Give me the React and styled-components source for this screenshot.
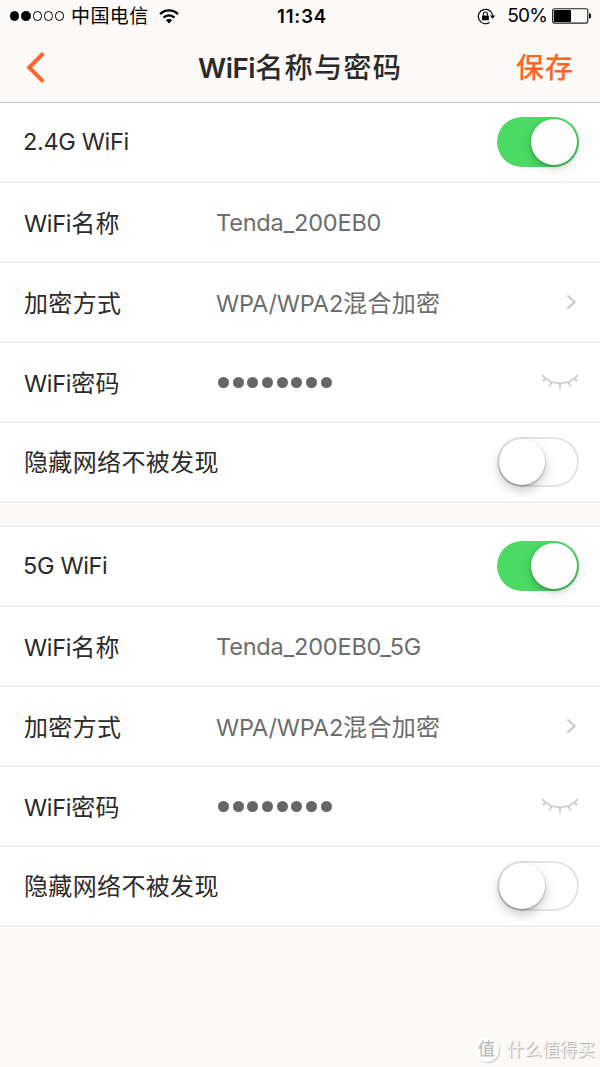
import { useState } from "react";
import styled, { createGlobalStyle } from "styled-components";

// latin and chinese glyphs need their own size and tracking
function Mixed ({ text, ls, weight }) {
    return text.split(/([\u4e00-\u9fff]+)/).filter(Boolean).map((part, i) => (
        /[\u4e00-\u9fff]/.test(part) ? <Han key={i}>{part}</Han> : <Latin key={i} $ls={ls} $weight={weight}>{part}</Latin>
    ))
}

function StatusBar () {
    return (
        <Status>
            <Carrier>
                <Signal>
                    <SignalDot $full/>
                    <SignalDot $full/>
                    <SignalDot/>
                    <SignalDot/>
                    <SignalDot/>
                </Signal>
                <CarrierName>中国电信</CarrierName>
                <svg width="20" height="15" viewBox="0 0 20 15" fill="none" stroke="#000">
                    <path d="M1.1 5.1A12.6 12.6 0 0 1 18.9 5.1" strokeWidth="2.3"/>
                    <path d="M4.5 8.6A7.8 7.8 0 0 1 15.5 8.6" strokeWidth="2.2"/>
                    <path d="M10 14.4L6.9 11.3A4.4 4.4 0 0 1 13.1 11.3Z" fill="#000" stroke="none"/>
                </svg>
            </Carrier>
            <Time>11:34</Time>
            <Power>
                <svg width="19" height="17" viewBox="0 0 19 17" fill="none" stroke="#000">
                    <path d="M12.6 14.5A7.2 7.2 0 1 1 15.7 7.6" strokeWidth="1.2"/>
                    <path d="M12.9 7.4H18.3L15.6 10.8Z" fill="#000" stroke="none"/>
                    <rect x="5" y="7.4" width="6.8" height="4.8" rx="0.5" fill="#000" stroke="none"/>
                    <path d="M6.4 7.6V6A2 2 0 0 1 10.4 6V7.6" strokeWidth="1.1"/>
                </svg>
                <Percent>50%</Percent>
                <svg width="40" height="16" viewBox="0 0 40 16">
                    <rect x="0.6" y="0.7" width="35.2" height="14.4" rx="2" fill="none" stroke="#222" strokeWidth="1.1"/>
                    <rect x="1.8" y="1.9" width="17.2" height="12" rx="0.6" fill="#000"/>
                    <path d="M37 5.2C38.5 5.4 39.2 6.4 39.2 7.9C39.2 9.4 38.5 10.4 37 10.6Z" fill="#000"/>
                </svg>
            </Power>
        </Status>
    )
}

function Network ({ name, ssid }) {
    const [enabled, setEnabled] = useState(true)
    const [hidden, setHidden] = useState(false)

    return (
        <Group>
            <Row>
                <Label $title><Mixed text={name} ls="-0.35px"/></Label>
                <Switch $on={enabled} onClick={() => setEnabled(!enabled)}><Knob/></Switch>
            </Row>
            <Row $top="2px">
                <Label><Mixed text="WiFi名称" ls="-0.3px"/></Label>
                <Value><Mixed text={ssid} ls="-0.2px"/></Value>
            </Row>
            <Row $top="4px">
                <Label>加密方式</Label>
                <Value $top="1px"><Mixed text="WPA/WPA2混合加密" ls="-0.2px"/></Value>
                <Chevron width="11" height="16" viewBox="0 0 11 16">
                    <path d="M1.5 1.5L8.7 8L1.5 14.5" fill="none" stroke="#c7c7cb" strokeWidth="2"/>
                </Chevron>
            </Row>
            <Row $top="2px">
                <Label><Mixed text="WiFi密码" ls="-0.3px"/></Label>
                <Password>
                    {[...Array(8).keys()].map(num => <PasswordDot key={num}/>)}
                </Password>
                <Lashes width="38" height="16" viewBox="0 0 38 16" fill="none" stroke="#c8c8c8" strokeWidth="1.5">
                    <path d="M1.3 1.2C10.5 12 27.5 12 36.7 1.2"/>
                    <path d="M4.8 4.2L1.6 7.4M11 8L8.2 12.6M19 9.4V15.2M27 8L29.8 12.6M33.2 4.2L36.4 7.4"/>
                </Lashes>
            </Row>
            <Row $top="2px">
                <Label>隐藏网络不被发现</Label>
                <Switch $on={hidden} onClick={() => setHidden(!hidden)}><Knob/></Switch>
            </Row>
        </Group>
    )
}

function App () {
    return (
        <Page>
            <GlobalStyle/>
            <Header>
                <StatusBar/>
                <NavBar>
                    <Back>
                        <svg width="20" height="32" viewBox="0 0 20 32">
                            <path d="M18.3 1.3L4.2 15.5L18.3 29.7" fill="none" stroke="#ff6529" strokeWidth="4"/>
                        </svg>
                    </Back>
                    <Title><Mixed text="WiFi名称与密码" ls="-0.4px" weight="600"/></Title>
                    <Save>保存</Save>
                </NavBar>
            </Header>
            <Network name="2.4G WiFi" ssid="Tenda_200EB0"/>
            <Gap/>
            <Network name="5G WiFi" ssid="Tenda_200EB0_5G"/>
            <Watermark>
                <Badge>值</Badge>
                <span>什么值得买</span>
            </Watermark>
        </Page>
    )
}

const GlobalStyle = createGlobalStyle`
    * {
        box-sizing: border-box;
    }

    body {
        margin: 0;
        background-color: #fbfaf8;
    }

    svg {
        display: block;
        flex-shrink: 0;
    }
`

const Page = styled.main`
    width: 600px;
    height: 1067px;
    overflow: hidden;

    display: flex;
    flex-direction: column;

    background-color: #fbfaf8;
    font-family: Inter, "Noto Sans CJK SC", sans-serif;
    color: #2b2b2b;
`

const Han = styled.span`
    font-family: "Noto Sans CJK SC", sans-serif;
`

const Latin = styled.span`
    font-size: 0.98em;
    font-weight: ${({$weight}) => $weight || "inherit"};
    letter-spacing: ${({$ls}) => $ls};
`

const Header = styled.header`
    height: 103px;
    flex-shrink: 0;
    border-bottom: 1px solid #c6c6c6;
`

const Status = styled.div`
    height: 32px;
    padding: 0 8px 0 10px;

    display: grid;
    grid-template-columns: 1fr auto 1fr;
    align-items: center;

    color: #000;
`

const Carrier = styled.div`
    display: flex;
    align-items: center;
`

const Signal = styled.div`
    display: flex;
    gap: 2px;
`

const SignalDot = styled.span`
    width: 9.3px;
    height: 9.3px;
    border-radius: 50%;
    border: 1px solid #000;
    background-color: ${({$full}) => $full ? "#000" : "transparent"};
`

const CarrierName = styled.span`
    margin: 0 10px 0 6.5px;
    padding-top: 2px;
    font-size: 19px;
    line-height: 30px;
    letter-spacing: 0.4px;
`

const Time = styled.span`
    padding-left: 2px;
    font-size: 18.5px;
    font-weight: 600;
    line-height: 32px;
    letter-spacing: 0.9px;
`

const Power = styled.div`
    display: flex;
    align-items: center;
    justify-content: flex-end;
`

const Percent = styled.span`
    margin: 0 5px 0 11px;
    font-size: 19px;
    line-height: 32px;
    letter-spacing: -0.8px;
`

const NavBar = styled.nav`
    height: 70px;
    padding: 0 26px 0 25px;

    display: grid;
    grid-template-columns: 1fr auto 1fr;
    align-items: center;
`

const Button = styled.button`
    padding: 0;
    border: none;
    background: none;
    font-family: inherit;
    cursor: pointer;
`

const Back = styled(Button)`
    justify-self: start;
`

const Title = styled.h1`
    margin: 0;
    padding-left: 1px;
    font-size: 28.2px;
    font-weight: 500;
    line-height: 68px;
    padding-bottom: 2px;
    letter-spacing: 1.2px;
    white-space: nowrap;
`

const Save = styled(Button)`
    justify-self: end;
    font-size: 28px;
    font-weight: 500;
    line-height: 70px;
    letter-spacing: 1px;
    color: #ff6529;
`

const Group = styled.section`
    flex-shrink: 0;
    background-color: #fff;
`

const Gap = styled.div`
    height: 24px;
    flex-shrink: 0;
    border-bottom: 2px solid #efefef;
`

const Label = styled.span`
    width: 192px;
    flex-shrink: 0;
    margin-left: ${({$title}) => $title ? "-1px" : "0"};
`

const Value = styled.span`
    padding-top: ${({$top}) => $top || "2px"};
    color: #6d6d6d;
`

const Row = styled.div`
    height: 80px;
    padding: 0 21px 0 24px;
    border-bottom: 2px solid #f1f1f1;

    display: flex;
    align-items: center;

    font-size: 24px;
    line-height: 74px;
    letter-spacing: 0.35px;
    white-space: nowrap;

    ${Label} {
        padding-top: ${({$top}) => $top || "0"};
    }
`

const Password = styled.div`
    padding-left: 2px;
    display: flex;
    gap: 3.7px;
`

const PasswordDot = styled.span`
    width: 11px;
    height: 11px;
    border-radius: 50%;
    background-color: #666;
`

const Chevron = styled.svg`
    margin-left: auto;
    margin-right: 2px;
`

const Lashes = styled.svg`
    margin-left: auto;
`

const Knob = styled.span`
    width: 46px;
    height: 46px;
    border-radius: 50%;
    background-color: #fff;
`

const Switch = styled(Button)`
    width: 82px;
    height: 50px;
    padding: 2px;
    border-radius: 25px;
    margin-left: auto;
    flex-shrink: 0;

    display: flex;
    justify-content: ${({$on}) => $on ? "flex-end" : "flex-start"};

    background-color: ${({$on}) => $on ? "#4cd964" : "#fff"};
    box-shadow: ${({$on}) => $on ? "none" : "inset 0 0 0 2px #e4e4e4"};

    ${Knob} {
        box-shadow: ${({$on}) => $on
            ? "0 2px 4px rgba(0, 0, 0, 0.25), 0 5px 14px rgba(0, 0, 0, 0.1)"
            : "0 1px 2px rgba(0, 0, 0, 0.35), 0 5px 12px rgba(0, 0, 0, 0.22)"};
    }
`

const Watermark = styled.footer`
    margin-top: auto;
    padding: 0 5px 4px 0;

    display: flex;
    align-items: center;
    justify-content: flex-end;
    gap: 8px;

    font-size: 17.7px;
    line-height: 26px;
    color: #f4f4f3;
    text-shadow: 1px 1px 1px #a8a8a8;
`

const Badge = styled.span`
    width: 24px;
    height: 24px;
    border-radius: 50%;

    font-size: 17px;
    font-weight: 500;
    line-height: 23px;
    text-align: center;
    text-shadow: none;

    background-color: #fff;
    color: #bdbdbd;
    box-shadow: 1px 1px 1px #c8c8c8;
`

export default App
